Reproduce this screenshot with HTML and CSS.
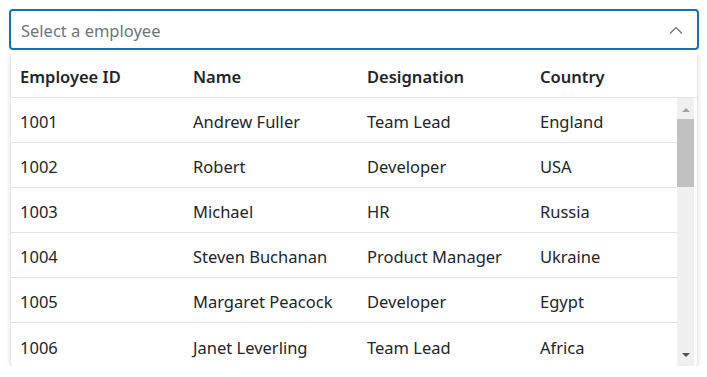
FILE: index.html
```html
<!DOCTYPE html>
<html lang="en">
<head>
  <meta charset="UTF-8" />
  <title>Employee Dropdown</title>
  <link rel="stylesheet" href="styles.css">
</head>
<body>
  <div class="combo">
    <div class="combo-input">
      <span class="placeholder">Select a employee</span>
      <svg class="chevron" width="14" height="8" viewBox="0 0 14 8">
        <path d="M1 7.5 L7 1.5 L13 7.5" fill="none" stroke="#6b6b6b" stroke-width="1.2" />
      </svg>
    </div>
    <div class="popup">
      <div class="grid-head">
        <div class="row head">
          <div>Employee ID</div>
          <div>Name</div>
          <div>Designation</div>
          <div>Country</div>
        </div>
      </div>
      <div class="grid-body">
        <div class="rows">
          <div class="row"><div>1001</div><div>Andrew Fuller</div><div>Team Lead</div><div>England</div></div>
          <div class="row"><div>1002</div><div>Robert</div><div>Developer</div><div>USA</div></div>
          <div class="row"><div>1003</div><div>Michael</div><div>HR</div><div>Russia</div></div>
          <div class="row"><div>1004</div><div>Steven Buchanan</div><div>Product Manager</div><div>Ukraine</div></div>
          <div class="row"><div>1005</div><div>Margaret Peacock</div><div>Developer</div><div>Egypt</div></div>
          <div class="row last"><div>1006</div><div>Janet Leverling</div><div>Team Lead</div><div>Africa</div></div>
        </div>
        <div class="scrollbar">
          <span class="arrow up"></span>
          <span class="thumb"></span>
          <span class="arrow down"></span>
        </div>
      </div>
    </div>
  </div>
</body>
</html>
```

FILE: styles.css
```css
body {
  margin: 0;
  padding: 9px 8px 0 9px;
  background: #fff;
  font-family: "Noto Sans", "Open Sans", sans-serif;
  color: #212529;
}
.combo {
  width: 690px;
}
.combo-input {
  height: 41px;
  box-sizing: border-box;
  border: 2px solid #0f73b8;
  border-radius: 4px;
  display: flex;
  align-items: center;
  justify-content: space-between;
  padding: 0 14px 0 10px;
}
.placeholder {
  font-size: 16.5px;
  color: #6c757d;
  padding-top: 2px;
}
.chevron {
  margin-top: 1px;
}
.popup {
  margin: 2px 2px 0 2px;
  background: #fff;
  box-shadow: 0 2px 5px rgba(0, 0, 0, 0.22);
  border-radius: 0 0 3px 3px;
  overflow: hidden;
}
.row {
  display: grid;
  grid-template-columns: 173px 174px 173px 1fr;
  height: 45px;
  align-items: center;
  border-bottom: 1px solid #e4e4e4;
  font-size: 16.5px;
  box-sizing: border-box;
}
.row > div {
  padding: 3px 0 0 9px;
  white-space: nowrap;
}
.row.head {
  height: 46px;
  font-weight: 600;
}
.row.last {
  border-bottom: none;
}
.grid-body {
  display: flex;
  height: 268px;
  overflow: hidden;
}
.rows {
  flex: 1;
}
.scrollbar {
  width: 17px;
  margin-right: 3px;
  background: #f0f0f0;
  display: flex;
  flex-direction: column;
  align-items: center;
}
.thumb {
  width: 17px;
  height: 68px;
  background: #c1c1c1;
}
.arrow {
  width: 0;
  height: 0;
  border-left: 4px solid transparent;
  border-right: 4px solid transparent;
}
.arrow.up {
  margin: 10px 0 7px;
  border-bottom: 4px solid #a3a3a3;
}
.arrow.down {
  margin-top: auto;
  margin-bottom: 9px;
  border-top: 4px solid #505050;
}
```
